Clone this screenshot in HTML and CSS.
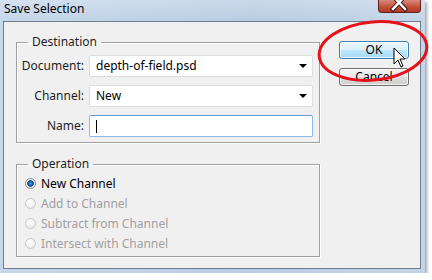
FILE: index.html
```html
<!DOCTYPE html>
<html lang="en">
<head>
  <meta charset="UTF-8">
  <title>Save Selection</title>
  <link rel="stylesheet" href="styles.css">
</head>
<body>

  <div class="window">
    <div class="titlebar">
      <span class="title">Save Selection</span>
      <span class="close">
        <svg width="41" height="12" viewBox="0 0 41 12">
          <path d="M14,-4 L26,9 M26,-4 L14,9" stroke="#3a1a14" stroke-width="4.5" stroke-linecap="square"/>
          <path d="M14,-4 L26,9 M26,-4 L14,9" stroke="#ffffff" stroke-width="2.5" stroke-linecap="square"/>
        </svg>
      </span>
    </div>

    <div class="client">
      <div class="groups">
        <fieldset class="group">
          <legend>Destination</legend>
          <div class="fields">
            <label>Document:</label>
            <div class="combo">depth-of-field.psd<span class="arrow"></span></div>

            <label>Channel:</label>
            <div class="combo">New<span class="arrow"></span></div>

            <label>Name:</label>
            <div class="textbox"><span class="caret"></span></div>
          </div>
        </fieldset>

        <fieldset class="group operation">
          <legend>Operation</legend>
          <div class="options">
            <div class="radio checked"><span class="dot"></span>New Channel</div>
            <div class="radio disabled"><span class="dot"></span>Add to Channel</div>
            <div class="radio disabled"><span class="dot"></span>Subtract from Channel</div>
            <div class="radio disabled"><span class="dot"></span>Intersect with Channel</div>
          </div>
        </fieldset>
      </div>

      <div class="buttons">
        <button class="btn default">OK</button>
        <button class="btn">Cancel</button>
      </div>
    </div>
  </div>

  <!-- red marker drawn over the screenshot -->
  <svg class="marker" width="432" height="280" viewBox="0 0 432 280">
    <ellipse cx="373" cy="51" rx="54" ry="29" transform="rotate(-6 373 51)" fill="none" stroke="#e5121a" stroke-width="3"/>
  </svg>

  <svg class="pointer" width="14" height="21" viewBox="0 0 14 21">
    <path d="M1,1 L1,17 L5,13 L8,20 L10,19 L7,12 L12,12 Z" fill="#ffffff" stroke="#000000" stroke-width="1" stroke-linejoin="miter"/>
  </svg>

</body>
</html>
```

FILE: styles.css
```css
body {
  margin: 0;
  background-color: #ffffff;
  font-family: 'Noto Sans', 'Open Sans', sans-serif;
  font-size: 12px;
  color: #000000;
}
.window {
  width: 418px;
  height: 269px;
  padding: 0 4px 4px 3px;
  background: linear-gradient(to right, #c6d7ea, #b8cce2 60%, #c4d5e8);
  box-shadow: 2px 2px 3px rgba(0, 0, 0, 0.35);
  display: flex;
  flex-direction: column;
}
.titlebar {
  height: 21px;
  display: flex;
  align-items: flex-start;
  background: linear-gradient(to bottom, rgba(255, 255, 255, 0.25), rgba(255, 255, 255, 0));
  margin: 0 -4px 0 -3px;
  padding: 0 4px 0 4px;
}
.title {
  line-height: 17px;
  color: #000000;
}
.close {
  margin-left: auto;
  width: 41px;
  height: 12px;
  border: 1px solid #5e241c;
  border-top: none;
  border-radius: 0 0 4px 4px;
  background: linear-gradient(to bottom, #d88a7c, #c4513c 55%, #b03a28);
  display: flex;
}
.client {
  flex: 1;
  border: 1px solid #6d7c8e;
  background-color: #f0f0f0;
  display: flex;
  align-items: flex-start;
}
.groups {
  padding: 12px 0 0 12px;
  display: flex;
  flex-direction: column;
}
.group {
  width: 302px;
  margin: 0;
  padding: 0;
  border: 1px solid #a0a0a0;
  box-shadow: inset 1px 1px 0 #ffffff, 1px 1px 0 #ffffff;
  min-inline-size: 0;
}
.group legend {
  margin-left: 11px;
  padding: 0 4px;
  line-height: 16px;
  color: #1e1e1e;
}
.fields {
  display: grid;
  grid-template-columns: 67px 1fr;
  column-gap: 5px;
  row-gap: 8px;
  padding: 5px 6px 5px 0;
}
.fields label {
  text-align: right;
  line-height: 22px;
  color: #1e1e1e;
}
.combo {
  position: relative;
  height: 20px;
  line-height: 20px;
  padding-left: 6px;
  background-color: #ffffff;
  border: 1px solid #dcdcdc;
  border-radius: 2px;
}
.arrow {
  position: absolute;
  right: 5px;
  top: 8px;
  border-left: 4px solid transparent;
  border-right: 4px solid transparent;
  border-top: 4px solid #000000;
}
.textbox {
  height: 20px;
  background-color: #ffffff;
  border: 1px solid #8ebbe6;
  border-top-color: #5d9bd6;
  border-radius: 2px;
  display: flex;
  align-items: center;
  padding-left: 6px;
}
.caret {
  width: 1px;
  height: 13px;
  background-color: #000000;
}
.operation {
  margin-top: 13px;
}
.options {
  padding: 1px 0 3px 8px;
}
.radio {
  height: 20px;
  display: flex;
  align-items: center;
  gap: 5px;
}
.dot {
  width: 9px;
  height: 9px;
  border-radius: 50%;
  border: 1px solid #c8c8c8;
  background: radial-gradient(circle at 40% 35%, #ffffff, #e4e4e4);
}
.radio.checked .dot {
  border-color: #8a8a8a;
  background: radial-gradient(circle, #5ba0e0 0, #1c5ca8 2px, #174b8c 3px, #e8e8e8 3.5px, #f8f8f8 5px);
}
.radio.disabled {
  color: #a0a0a0;
}
.buttons {
  margin-left: 19px;
  padding-top: 19px;
  display: flex;
  flex-direction: column;
  gap: 9px;
}
.btn {
  width: 70px;
  height: 18px;
  padding: 0;
  font-family: 'Noto Sans', 'Open Sans', sans-serif;
  font-size: 12px;
  line-height: 16px;
  color: #000000;
  border: 1px solid #707070;
  border-radius: 3px;
  background: linear-gradient(to bottom, #f2f2f2, #ebebeb 50%, #dddddd 50%, #cfcfcf);
  box-shadow: inset 0 0 0 1px rgba(255, 255, 255, 0.7);
}
.btn.default {
  border-color: #3c7fb1;
  background: linear-gradient(to bottom, #eaf6fd, #d9f0fc 50%, #bee6fd 50%, #a7d9f5);
}
.marker {
  position: absolute;
  left: 0;
  top: 0;
}
.pointer {
  position: absolute;
  left: 393px;
  top: 47px;
}
```
